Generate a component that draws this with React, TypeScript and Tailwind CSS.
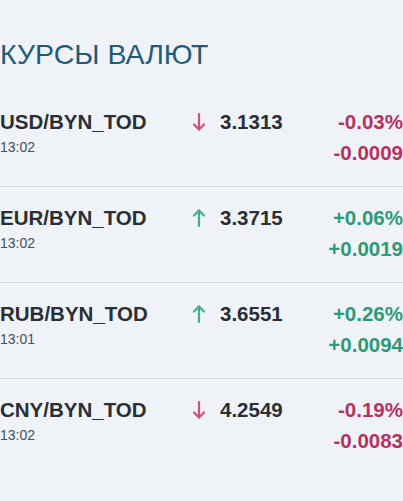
import React from "react";

type Row = { pair: string; time: string; dir: "up" | "down"; price: string; pct: string; abs: string };

const rows: Row[] = [
  { pair: "USD/BYN_TOD", time: "13:02", dir: "down", price: "3.1313", pct: "-0.03%", abs: "-0.0009" },
  { pair: "EUR/BYN_TOD", time: "13:02", dir: "up", price: "3.3715", pct: "+0.06%", abs: "+0.0019" },
  { pair: "RUB/BYN_TOD", time: "13:01", dir: "up", price: "3.6551", pct: "+0.26%", abs: "+0.0094" },
  { pair: "CNY/BYN_TOD", time: "13:02", dir: "down", price: "4.2549", pct: "-0.19%", abs: "-0.0083" },
];

function Arrow({ dir }: { dir: "up" | "down" }) {
  const color = dir === "up" ? "#3fae8a" : "#d0507a";
  return (
    <svg width="14" height="20" viewBox="0 0 14 20" fill="none" stroke={color} strokeWidth="2.2" strokeLinecap="round" strokeLinejoin="round">
      {dir === "down" ? (
        <>
          <path d="M7 2 V17.5" />
          <path d="M2 12.5 L7 17.5 L12 12.5" />
        </>
      ) : (
        <>
          <path d="M7 18 V2.5" />
          <path d="M2 7.5 L7 2.5 L12 7.5" />
        </>
      )}
    </svg>
  );
}

export default function App() {
  return (
    <div className="w-[403px] h-[501px] overflow-hidden bg-[#eff3f7] text-[#2b2f33]" style={{ fontFamily: '"Liberation Sans", Arial, sans-serif' }}>
      <div className="pt-[38px]">
        <h1 className="text-[28.5px] leading-[32px] font-normal text-[#1f5c7a] mb-[21px]">КУРСЫ ВАЛЮТ</h1>
        {rows.map((r, i) => (
          <div
            key={r.pair}
            className={`flex pt-[17px] pb-[19px] ${i < rows.length - 1 ? "border-b border-[#d6dce3]" : ""}`}
          >
            <div className="w-[192px]">
              <div className="text-[20.5px] leading-[28px] font-bold">{r.pair}</div>
              <div className="text-[14px] leading-[16px] mt-[3px] text-[#4a4f55]">{r.time}</div>
            </div>
            <div className="w-[28px] h-[28px] flex items-center">
              <Arrow dir={r.dir} />
            </div>
            <div className="flex-1 text-[20.5px] leading-[28px] font-bold">{r.price}</div>
            <div className={`text-right text-[20.5px] leading-[28px] font-bold ${r.dir === "up" ? "text-[#2f9a77]" : "text-[#b8325f]"}`}>
              <div>{r.pct}</div>
              <div className="mt-[3px]">{r.abs}</div>
            </div>
          </div>
        ))}
      </div>
    </div>
  );
}
